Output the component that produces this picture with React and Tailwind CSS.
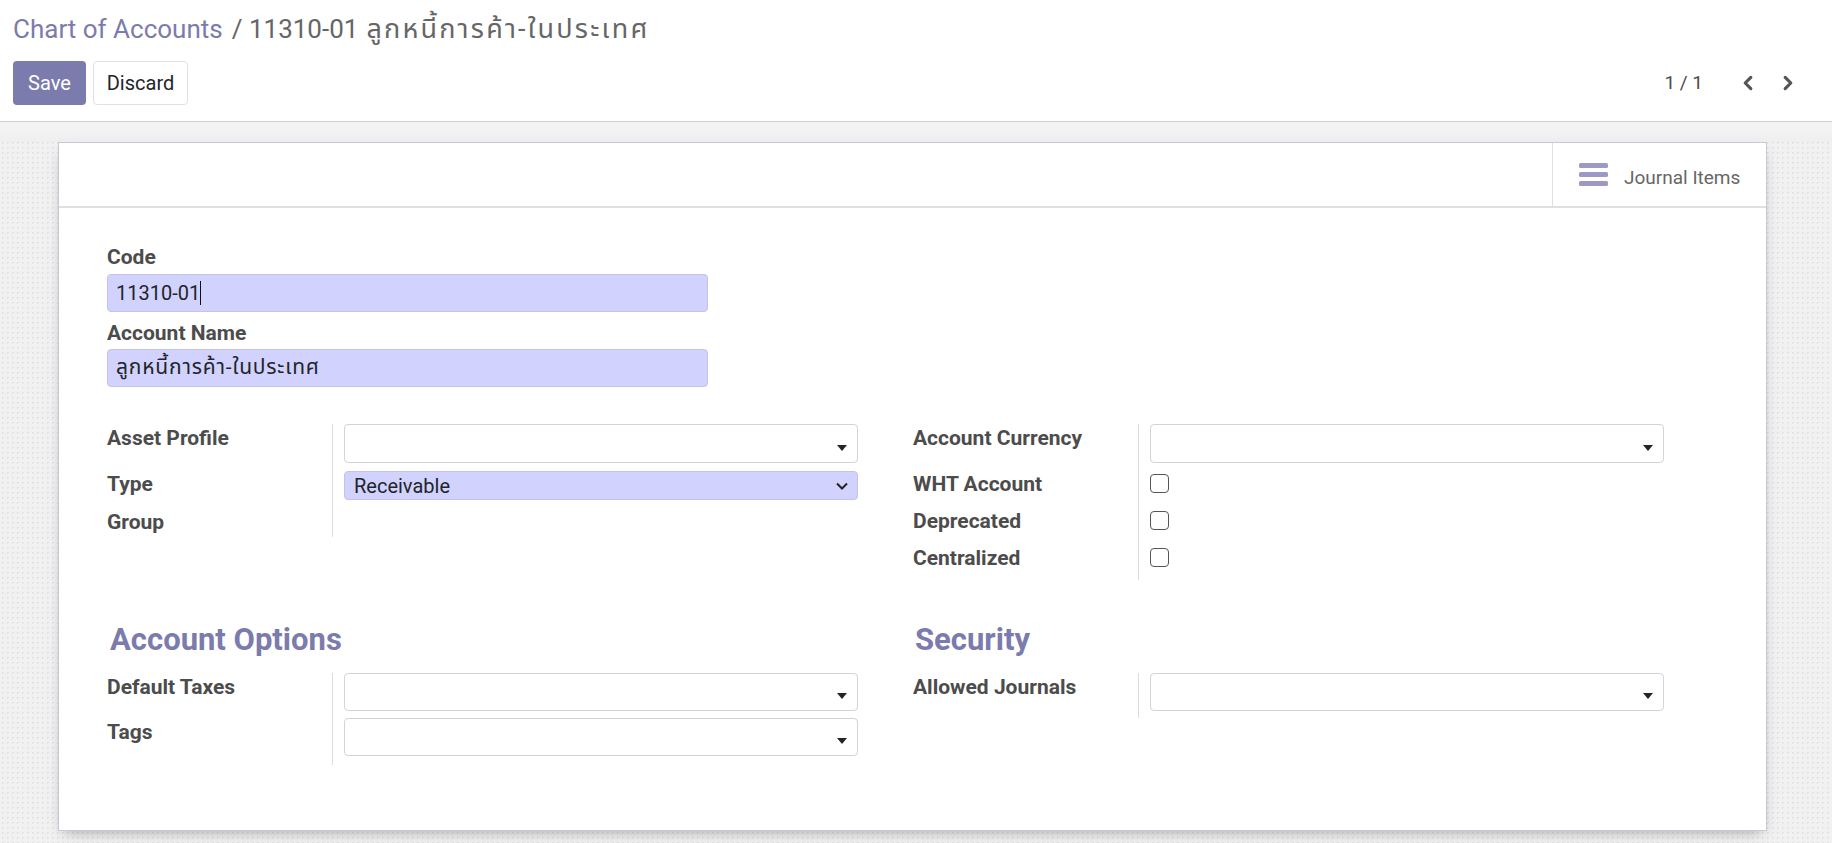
const font = "font-['Roboto','Noto_Sans_Thai','Noto_Sans','DejaVu_Sans',sans-serif]";

function Caret() {
  return (
    <svg className="h-[6px] w-[10px] text-[#212529]" viewBox="0 0 10 6" fill="currentColor">
      <path d="M0 0h10L5 6z" />
    </svg>
  );
}

function Many2one({ h = 'h-[38px]' }) {
  return (
    <div className={`flex w-full ${h} items-end justify-end rounded-[4px] border border-[#ced4da] bg-white pb-[11px] pr-[10px]`}>
      <Caret />
    </div>
  );
}

function Check() {
  return <div className="mt-[3px] h-[19px] w-[19px] rounded-[4px] border border-[#555] bg-white" />;
}

function Row({ label, h, pt = 'pt-[2px]', children }) {
  return (
    <div className={`flex ${h}`}>
      <div className={`w-[226px] shrink-0 border-r border-[#dcdcdc] ${pt} text-[21px] font-bold leading-6 text-[#4c4c4c]`}>
        {label}
      </div>
      <div className="flex-1 pl-[11px]">{children}</div>
    </div>
  );
}

export default function App() {
  return (
    <div className={`${font} flex h-[843px] w-[1832px] flex-col overflow-hidden bg-[#f1f1f1] bg-[radial-gradient(#e2e2e2_1px,transparent_1px)] bg-[length:5px_5px]`}>
      {/* control panel */}
      <div className="h-[122px] shrink-0 border-b border-[#cfcfcf] bg-white px-[13px]">
        <div className="flex h-[58px] items-center text-[26px] text-[#666]">
          <span className="text-[#7c7bad]">Chart of Accounts</span>
          <span className="ml-[9px]">/ 11310-01</span>
          <span className="ml-[8px] text-[27px] tracking-[2.2px]">ลูกหนี้การค้า-ในประเทศ</span>
        </div>
        <div className="mt-[3px] flex items-center">
          <button type="button" className="h-[44px] w-[73px] rounded-[4px] bg-[#7c7bad] text-[20px] text-white">Save</button>
          <button type="button" className="ml-[7px] h-[44px] w-[95px] rounded-[4px] border border-[#dee2e6] bg-white text-[20px] text-[#212529]">Discard</button>
          <div className="ml-auto flex items-center text-[19px] text-[#4c4c4c]">
            <span>1 / 1</span>
            <div className="ml-[36px] flex items-center gap-[22px] pr-[22px] text-[#555]">
              <svg className="h-[18px] w-[18px]" viewBox="0 0 16 16" fill="none" stroke="currentColor" strokeWidth="2.8" strokeLinecap="round" strokeLinejoin="round"><path d="M10.5 3 5.5 8l5 5" /></svg>
              <svg className="h-[18px] w-[18px]" viewBox="0 0 16 16" fill="none" stroke="currentColor" strokeWidth="2.8" strokeLinecap="round" strokeLinejoin="round"><path d="M5.5 3l5 5-5 5" /></svg>
            </div>
          </div>
        </div>
      </div>

      {/* sheet area */}
      <div className="h-[20px] shrink-0 bg-gradient-to-b from-[#f4f4f4] to-[#efefef]" />
      <div className="ml-[58px] flex h-[689px] w-[1709px] flex-col border border-[#c9c8d6] bg-white shadow-[0_6px_14px_-6px_rgba(0,0,0,0.35)]">
        <div className="flex h-[65px] shrink-0 justify-end border-b-2 border-[#dedee3]">
          <div className="flex w-[214px] items-center border-l border-[#dedee3] pl-[26px]">
            <svg className="h-[23px] w-[29px]" viewBox="0 0 29 23" fill="#9d99c7">
              <rect x="0" y="0" width="29" height="5" rx="1.5" />
              <rect x="0" y="9" width="29" height="5" rx="1.5" />
              <rect x="0" y="18" width="29" height="5" rx="1.5" />
            </svg>
            <span className="ml-[16px] mt-[8px] text-[19px] text-[#666]">Journal Items</span>
          </div>
        </div>

        <div className="pl-[48px] pt-[37px]">
          <div className="text-[21px] font-bold leading-6 text-[#4c4c4c]">Code</div>
          <div className="mt-[5px] flex h-[38px] w-[601px] items-center rounded-[4px] border border-[#c3c3e6] bg-[#d2d2ff] px-[8px] text-[20px] text-[#212529]">
            <span>11310-01</span>
            <span className="h-[24px] w-px bg-[#111]" />
          </div>
          <div className="mt-[9px] text-[21px] font-bold leading-6 text-[#4c4c4c]">Account Name</div>
          <div className="mt-[4px] flex h-[38px] w-[601px] items-center rounded-[4px] border border-[#c3c3e6] bg-[#d2d2ff] px-[8px] text-[21px] tracking-[0.8px] text-[#212529]">
            ลูกหนี้การค้า-ในประเทศ
          </div>

          <div className="mt-[37px] flex gap-[55px]">
            <div className="w-[751px]">
              <Row label="Asset Profile" h="h-[47px]">
                <Many2one h="h-[39px]" />
              </Row>
              <Row label="Type" h="h-[39px]" pt="pt-[1px]">
                <div className="flex h-[29px] items-center justify-between rounded-[4px] border border-[#c3c3e6] bg-[#d2d2ff] pl-[9px] pr-[8px] text-[20px] text-[#212529]">
                  <span>Receivable</span>
                  <svg className="h-[10px] w-[14px]" viewBox="0 0 14 10" fill="none" stroke="#222" strokeWidth="2"><path d="M2 2.5l5 5 5-5" /></svg>
                </div>
              </Row>
              <Row label="Group" h="h-[27px]" pt="pt-0" />
            </div>
            <div className="w-[751px]">
              <Row label="Account Currency" h="h-[47px]">
                <Many2one h="h-[39px]" />
              </Row>
              <Row label="WHT Account" h="h-[37px]" pt="pt-[1px]"><Check /></Row>
              <Row label="Deprecated" h="h-[37px]" pt="pt-[1px]"><Check /></Row>
              <Row label="Centralized" h="h-[35px]" pt="pt-[1px]"><Check /></Row>
            </div>
          </div>

          <div className="mt-[44px] flex gap-[55px]">
            <div className="w-[751px]">
              <div className="pl-[3px] text-[31px] font-bold leading-8 text-[#7c7bad]">Account Options</div>
              <div className="mt-[17px]">
                <Row label="Default Taxes" h="h-[45px]"><Many2one /></Row>
                <Row label="Tags" h="h-[47px]"><Many2one /></Row>
              </div>
            </div>
            <div className="w-[751px]">
              <div className="pl-[2px] text-[31px] font-bold leading-8 text-[#7c7bad]">Security</div>
              <div className="mt-[17px]">
                <Row label="Allowed Journals" h="h-[45px]"><Many2one /></Row>
              </div>
            </div>
          </div>
        </div>
      </div>
    </div>
  );
}
